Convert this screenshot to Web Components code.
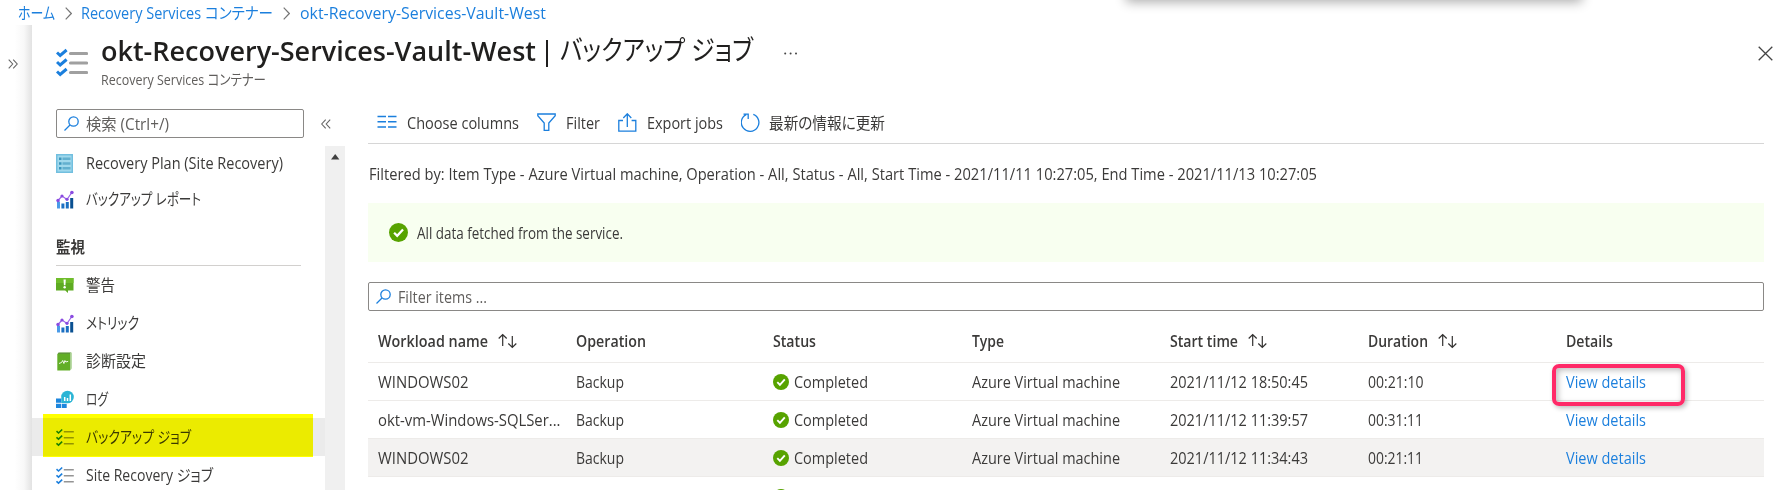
<!DOCTYPE html>
<html lang="ja">
<head>
<meta charset="utf-8">
<title>okt-Recovery-Services-Vault-West</title>
<style>
html, body { margin: 0; background: #fff; overflow: hidden; }
body { width: 1782px; height: 490px; font-family: "Open Sans", "Noto Sans CJK JP", sans-serif; color: #3b3a39; }
</style>
</head>
<body>
<portal-app></portal-app>
<script>
const define = (name, html, setup) => customElements.define(name, class extends HTMLElement {
  connectedCallback() {
    if (this.shadowRoot) return;
    const root = this.attachShadow({ mode: 'open' });
    const t = document.createElement('template');
    t.innerHTML = typeof html === 'function' ? html(this) : html;
    root.append(t.content.cloneNode(true));
    if (setup) setup(this, root);
  }
});

/* A one-line label that is condensed or widened to a given width. */
define('fit-text', `<style>
  :host { display: block; flex: none; white-space: nowrap; height: 24px; line-height: 24px; font-size: 15.6px; font-feature-settings: "palt"; }
  span { display: inline-block; transform-origin: 0 50%; }
</style><span><slot></slot></span>`, (el, root) => {
  const w = +el.getAttribute('w');
  const s = root.querySelector('span');
  el.style.width = w + 'px';
  if (el.hasAttribute('size')) el.style.fontSize = el.getAttribute('size') + 'px';
  s.style.transform = `scaleX(${w / s.getBoundingClientRect().width})`;
});

const chart = `<path d="M1 11.500h3v7H1z" fill="#4a9be8"/><path d="M5.400 13.500h3v5h-3zM9.800 12h3v6.500h-3z" fill="#1b6fc2"/><path d="M14.200 8h3v10.500h-3z" fill="#0a5091"/><path d="M2 10.500 6 6l5 3.500L15.800 2.500" fill="none" stroke="#9a60e8" stroke-width="1.2"/><g fill="#8a4be0"><circle cx="2" cy="10.500" r="1.700"/><circle cx="6" cy="6" r="1.600"/><circle cx="11" cy="9.300" r="1.600"/><circle cx="15.900" cy="2.500" r="1.800"/></g>`;
const checks = `<g fill="none" stroke="#1b7fdd" stroke-width="1.600"><path d="m.5 3.200 2 1.800L6.200 1.500M.5 9.300l2 1.800 3.700-3.500M.5 15.300l2 1.800 3.700-3.500"/></g><path d="M7.800 3.700h10M7.800 9.700h10M7.800 15.700h10" stroke="#949494" stroke-width="1.600"/>`;
const ICONS = {
  checks, chart,
  bigchecks: `<g fill="none" stroke="#1b7fdd" stroke-width="3"><path d="m1 4.500 3.200 3L10.600 2M1 14l3.200 3 6.400-5.500M1 23.500l3.200 3 6.400-5.500"/></g><path d="M14.500 5.500h16M14.500 15h16M14.500 24.500h16" stroke="#a0a0a0" stroke-width="3.200" stroke-linecap="round"/>`,
  plan: `<path d="M0 0h17v19H0z" fill="#72bfdf"/><path d="M1.500 1.500h14v16h-14z" fill="#a0d8ec"/><g fill="#3b96bd"><path d="M3 3.500h2.500V6H3zM3 8.300h2.500v2.500H3zM3 13h2.500v2.500H3z"/><path d="M6.500 3.500h8V6h-8zM6.500 8.300h8v2.500h-8zM6.500 13h8v2.500h-8z" opacity=".6"/></g>`,
  alert: `<path d="M0 2h17.500v12.500H12V17l-2.800-2.500H0z" fill="#5eab22"/><path d="M0 2h17.500v5H0z" fill="#6fbd2b"/><path d="M7.500 3.500h2.300l-.4 5.700H7.900z" fill="#fff"/><circle cx="8.650" cy="11.300" r="1.200" fill="#fff"/>`,
  diag: `<path d="M3.500.5H16v16H3.500z" fill="#cfe6c0"/><path d="M2.500.5h12.500L14 2H1.500z" fill="#5e9637"/><path d="M1.300 2h12.700v16.500H1.300z" fill="#62ae27"/><path d="m14 2 1.500-1.500V17L14 18.500z" fill="#a8cf90"/><path d="m3 11.500 2.500-1 1.200-2 1.200 3 1-3 1 1.500 2.300-.7" stroke="#fff" stroke-width=".9" fill="none"/>`,
  logs: `<path d="M0 8.500h5v4.300H0zM0 13.700h5V18H0zM5.700 13.700h5V18h-5z" fill="#1d86dd"/><circle cx="11.500" cy="7" r="6.300" fill="#2bb5d5"/><path d="M5.200 8v4.900h5" fill="#2bb5d5"/><path d="M8.700 7v4M11.500 8v3M14.300 4.500V11" stroke="#fff" stroke-width="1.500"/>`,
  search: `<g fill="none" stroke="#1b7fdd" stroke-width="1.300"><circle cx="9.500" cy="5.500" r="4.700"/><path d="M6 9 .5 14.500"/></g>`,
  columns: `<path d="M.5 1.500H9M11 1.500h8.500M.5 6.700H9M11 6.700h8.500M.5 12H9M11 12h8.500" stroke="#1b7fdd" stroke-width="1.400"/>`,
  funnel: `<path d="M.8 1h17.400v1.800L11.800 10v7.300H7.200V10L.8 2.800z" fill="none" stroke="#1b7fdd" stroke-width="1.300"/>`,
  export: `<path d="M5 7.500H.8v10.700h17V7.500h-4.200M9.300 14V1M5.300 5l4-4.200 4 4.200" fill="none" stroke="#1b7fdd" stroke-width="1.300"/>`,
  refresh: `<path d="M12.300 1.300a8.800 8.800 0 1 1-7.100.3M2.500 1.200h4.700v4.700" fill="none" stroke="#1b7fdd" stroke-width="1.300"/>`,
  ok: `<circle cx="8" cy="8" r="8" fill="#57a300"/><path d="m4.300 8.200 2.600 2.600 4.900-5.400" fill="none" stroke="#fff" stroke-width="1.900"/>`,
  sort: `<path d="M4.700 13V1.500M.7 5.500l4-4 4 4M14.300 3v11.500M10.300 10.500l4 4 4-4" fill="none" stroke="#323130" stroke-width="1.200"/>`,
  close: `<path d="m.7.7 13.600 13.600M14.300.7.7 14.300" stroke="#444" stroke-width="1.300"/>`,
  next: `<path d="m.7.700 5.600 5.800-5.600 5.800" fill="none" stroke="#767676" stroke-width="1.200"/>`,
  expand: `<path d="m.7.7 4 4.300-4 4.300M5.200.7l4 4.300-4 4.300" fill="none" stroke="#666" stroke-width="1.100"/>`,
  collapse: `<path d="m4.700.7-4 4.300 4 4.300M9.200.7l-4 4.300 4 4.300" fill="none" stroke="#666" stroke-width="1.100"/>`,
  dots: `<g fill="#444"><circle cx="1.200" cy="1.500" r="1"/><circle cx="6.600" cy="1.500" r="1"/><circle cx="12" cy="1.500" r="1"/></g>`,
  up: `<path d="M0 5.500 4.200 0l4.200 5.500z" fill="#404040"/>`
};
/* size = drawn width and height, box = viewBox width and height */
define('svg-icon', el => {
  const [w, h] = el.getAttribute('size').split(' ');
  const vb = el.getAttribute('box') || `${w} ${h}`;
  return `<style>:host{display:block;flex:none;width:${w}px;height:${h}px}svg{display:block}</style><svg width="${w}" height="${h}" viewBox="0 0 ${vb}">${ICONS[el.getAttribute('name')]}</svg>`;
});

define('bread-crumbs', `<style>
  :host { display: flex; align-items: center; height: 25px; padding: 0 0 0 18px; gap: 9.700px; color: #1b7fdd; }
  svg-icon { margin-top: 2px; }
</style>
<fit-text w="37">ホーム</fit-text><svg-icon name="next" size="7 13"></svg-icon>
<fit-text w="192">Recovery Services コンテナー</fit-text><svg-icon name="next" size="7 13"></svg-icon>
<fit-text w="246">okt-Recovery-Services-Vault-West</fit-text>`);

define('blade-header', `<style>
  :host { display: flex; height: 84px; padding-left: 24px; }
  .logo { margin: 23px 13px 0 0; }
  .titles { padding-top: 8px; }
  .line { display: flex; height: 36px; align-items: center; color: #201f1e; }
  b { font-weight: 600; }
  .bar { width: 1.500px; height: 27px; background: #201f1e; margin: 5px 12px 0 10px; }
  .line svg-icon { margin: 4px 0 0 31px; }
  .sub { color: #605e5c; margin-top: -1px; }
  .x { margin: 21px 9px 0 auto; }
</style>
<svg-icon class="logo" name="bigchecks" size="32 29"></svg-icon>
<div class="titles"><div class="line"><fit-text w="435" size="26.500"><b>okt-Recovery-Services-Vault-West</b></fit-text><i class="bar"></i><fit-text w="193" size="27.500" style="margin-top:-2px">バックアップ ジョブ</fit-text><svg-icon name="dots" size="14 3"></svg-icon></div>
<fit-text class="sub" w="165" size="14.300">Recovery Services コンテナー</fit-text></div>
<svg-icon class="x" name="close" size="15 15"></svg-icon>`);

define('search-field', `<style>
  :host { display: flex; align-items: center; box-sizing: border-box; height: 29px; border: 1px solid #8a8886; border-radius: 2px; padding-left: 7px; gap: 7px; color: #605e5c; background: #fff; }
</style><svg-icon name="search" size="15 15"></svg-icon><slot></slot>`);

define('nav-item', el => `<style>
  :host { display: flex; align-items: center; height: 38px; box-sizing: border-box; padding-left: 24px; gap: 11.600px; }
  :host([selected]) { background: #ebebeb; position: relative; }
  .mark { position: absolute; left: 11px; top: -4px; width: 270px; height: 43px; background: #ff0; mix-blend-mode: multiply; }
</style><svg-icon name="${el.getAttribute('icon')}" size="18 19"></svg-icon><fit-text w="${el.getAttribute('w')}"><slot></slot></fit-text>${el.hasAttribute('selected') ? '<div class="mark"></div>' : ''}`);

define('side-menu', `<style>
  :host { display: flex; flex-direction: column; width: 313px; height: 381px; overflow: hidden; }
  .top { display: flex; align-items: center; padding-left: 24px; height: 29px; gap: 17px; }
  search-field { width: 248px; }
  .body { display: flex; margin-top: 8px; flex: 1; }
  .list { width: 293px; }
  .head { margin: 13px 24px 0; padding: 4px 0 6px; border-bottom: 1px solid #d2d0ce; font-weight: 700; }
  .bar { width: 20px; background: #f0f0f0; display: flex; justify-content: center; padding-top: 8px; box-sizing: border-box; }
</style>
<div class="top"><search-field><fit-text w="83">検索 (Ctrl+/)</fit-text></search-field><svg-icon name="collapse" size="10 10"></svg-icon></div>
<div class="body"><div class="list">
<nav-item icon="plan" w="197" style="height:34px">Recovery Plan (Site Recovery)</nav-item>
<nav-item icon="chart" w="115">バックアップ レポート</nav-item>
<div class="head"><fit-text w="29">監視</fit-text></div>
<nav-item icon="alert" w="29">警告</nav-item>
<nav-item icon="chart" w="53">メトリック</nav-item>
<nav-item icon="diag" w="60">診断設定</nav-item>
<nav-item icon="logs" w="22">ログ</nav-item>
<nav-item icon="checks" w="105" selected>バックアップ ジョブ</nav-item>
<nav-item icon="checks" w="127">Site Recovery ジョブ</nav-item>
</div><div class="bar"><svg-icon name="up" size="9 6"></svg-icon></div></div>`);

define('command-bar', `<style>
  :host { display: flex; align-items: center; height: 34px; border-bottom: 1px solid #d6d6d6; padding-left: 9px; }
  fit-text { margin: -6px 18.700px 0 9.500px; }
  svg-icon { margin-top: -8px; }
</style>
<svg-icon name="columns" size="20 14"></svg-icon><fit-text w="112">Choose columns</fit-text>
<svg-icon name="funnel" size="19 18"></svg-icon><fit-text w="34">Filter</fit-text>
<svg-icon name="export" size="19 19"></svg-icon><fit-text w="76" style="margin-right:18px">Export jobs</fit-text>
<svg-icon name="refresh" size="19 19"></svg-icon><fit-text w="116">最新の情報に更新</fit-text>`);

define('info-banner', `<style>
  :host { display: flex; align-items: center; height: 59px; background: #f8fff0; padding-left: 21px; gap: 9px; }
</style><svg-icon name="ok" size="19 19" box="16 16"></svg-icon><slot></slot>`);

define('job-cell', `<style>
  :host { display: flex; align-items: center; min-width: 0; }
</style><slot></slot>`);
define('job-row', `<style>
  :host { display: grid; grid-template-columns: 198px 197px 199px 198px 198px 197.500px 1fr; box-sizing: border-box; height: 38px; padding-left: 10px; border-bottom: 1px solid #edebe9; }
  :host([active]) { background: #f3f2f1; }
  :host([head]) { height: 43px; font-weight: 600; }
</style><slot></slot>`);

define('jobs-table', el => {
  const sort = '<svg-icon name="sort" size="19 16" style="margin-left:10px"></svg-icon>';
  const heads = [['Workload name', 110, 1], ['Operation', 70], ['Status', 43], ['Type', 32], ['Start time', 68, 1], ['Duration', 60, 1], ['Details', 47]];
  const rows = [['WINDOWS02', 90.5, '2021/11/12 18:50:45', '00:21:10', 55.5], ['okt-vm-Windows-SQLSer...', 182.5, '2021/11/12 11:39:57', '00:31:11', 55], ['WINDOWS02', 90.5, '2021/11/12 11:34:43', '00:21:11', 55]];
  const cell = (t, w, pre = '', post = '', st = '') => `<job-cell>${pre}<fit-text w="${w}" style="${st}">${t}</fit-text>${post}</job-cell>`;
  const ok = '<svg-icon name="ok" size="16 16" style="margin-right:5px"></svg-icon>';
  return `<style>:host{display:block;position:relative;margin-top:9px}
  .ring{position:absolute;left:1184px;top:44px;width:133px;height:42px;box-sizing:border-box;border:4px solid #ff2a68;border-radius:7px;box-shadow:2px 2px 5px #0004, inset 2px 2px 6px #0004}</style>
  <job-row head>${heads.map(([t, w, s]) => cell(t, w, '', s ? sort : '')).join('')}</job-row>
  ${rows.map(([n, w, d, u, uw], i) => `<job-row ${i == 2 ? 'active' : ''}>${cell(n, w)}${cell('Backup', 48)}${cell('Completed', 74, ok)}${cell('Azure Virtual machine', 148)}${cell(d, 138)}${cell(u, uw)}${cell('View details', 80, '', '', 'color:#1b7fdd')}</job-row>`).join('')}
  <job-row><i></i><i></i><job-cell style="align-items:start;padding-top:12px">${ok}</job-cell></job-row>
  <div class="ring"></div>`;
});

define('jobs-view', `<style>
  :host { display: flex; flex-direction: column; width: 1396px; margin-left: 23px; }
  .by { padding: 18px 0 17px 1px; }
  search-field { margin-top: 20px; }
</style>
<command-bar></command-bar>
<div class="by"><fit-text w="948">Filtered by: Item Type - Azure Virtual machine, Operation - All, Status - All, Start Time - 2021/11/11 10:27:05, End Time - 2021/11/13 10:27:05</fit-text></div>
<info-banner><fit-text w="206">All data fetched from the service.</fit-text></info-banner>
<search-field><fit-text w="89">Filter items ...</fit-text></search-field>
<jobs-table></jobs-table>`);

define('portal-app', `<style>
  :host { display: block; height: 490px; overflow: hidden; position: relative; }
  .toast { position: absolute; left: 1126px; top: -20px; width: 456px; height: 20px; box-shadow: 0 2px 12px #0005; z-index: 2; }
  .main { display: flex; height: 465px; }
  .rail { width: 32px; flex: none; padding: 34px 0 0 8px; box-sizing: border-box; background: linear-gradient(90deg, #fff 45%, #f8f8f8 75%, #e2e2e2); }
  .blade { flex: 1; background: #fff; min-width: 0; }
  .cols { display: flex; }
</style>
<div class="toast"></div>
<bread-crumbs></bread-crumbs>
<div class="main"><div class="rail"><svg-icon name="expand" size="10 10"></svg-icon></div>
<div class="blade"><blade-header></blade-header><div class="cols"><side-menu></side-menu><jobs-view></jobs-view></div></div></div>`);
</script>
</body>
</html>
